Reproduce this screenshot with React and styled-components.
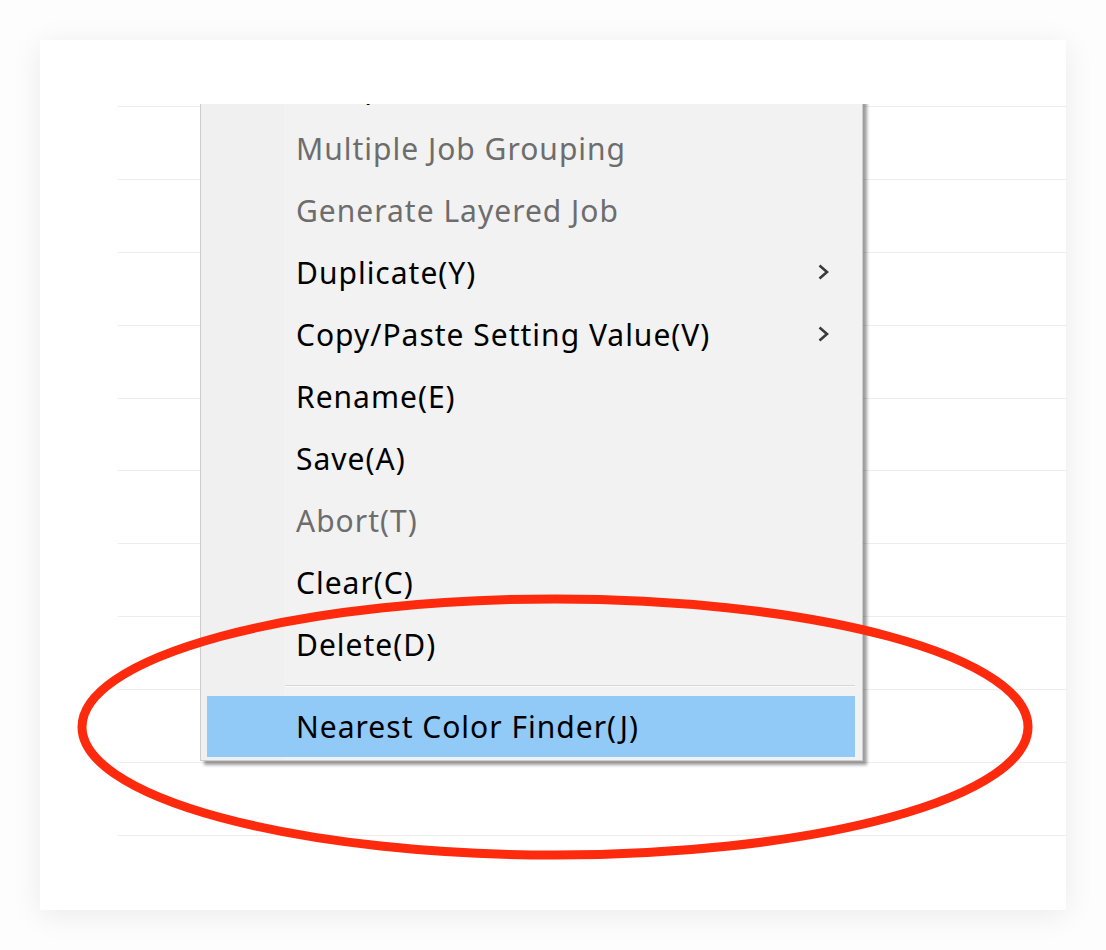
import React from 'react';
import styled, { createGlobalStyle } from 'styled-components';

const GlobalStyle = createGlobalStyle`
    html, body {
        margin: 0;
        padding: 0;
        background: #ffffff;
    }
`;

const Page = styled.div`
    width: 1106px;
    height: 950px;
    padding: 40px;
    box-sizing: border-box;
    background: #fdfdfd;
`;

const Card = styled.div`
    position: relative;
    width: 1026px;
    height: 870px;
    background: #ffffff;
    box-shadow: 0 5px 28px rgba(0, 0, 0, 0.08);
`;

const Sheet = styled.div`
    position: relative;
    top: 64px;
    height: 806px;
    overflow: hidden;
    padding: 2px 0 0 78px;
    box-sizing: border-box;
`;

const Row = styled.div`
    height: 72.9px;
    box-sizing: border-box;
    border-top: 1px solid #ededed;
`;

const Menu = styled.div`
    position: absolute;
    top: -52px;
    left: 160px;
    width: 663px;
    box-sizing: border-box;
    padding: 2px 7px 3px 6px;
    border: 1px solid #cccccc;
    background: linear-gradient(to right, #f0f0f0 83px, #f2f2f2 83px);
    box-shadow: 4px 4px 3px rgba(0, 0, 0, 0.38);
    font-family: "Noto Sans", "Open Sans", sans-serif;
    font-size: 30px;
    letter-spacing: 1px;
`;

const Item = styled.div`
    display: flex;
    align-items: center;
    justify-content: space-between;
    height: ${props => (props.$active ? 61 : 62)}px;
    padding: 0 25px 0 89px;
    background: ${props => (props.$active ? '#91c9f7' : 'transparent')};
    color: ${props => (props.$disabled ? '#6d6d6d' : '#000000')};
    white-space: nowrap;
`;

const Separator = styled.div`
    height: 21px;
    display: flex;
    align-items: center;
    padding-left: 78px;

    &::after {
        content: '';
        flex: 1;
        height: 1px;
        background: #d7d7d7;
        border-bottom: 1px solid #fafafa;
    }
`;

const Chevron = () => (
    <svg width="13" height="16" viewBox="0 0 13 16">
        <polyline points="2.5,1.5 10,8 2.5,14.5" fill="none" stroke="#3a3a3a" strokeWidth="2.6" />
    </svg>
);

const Annotation = styled.svg`
    position: absolute;
    left: -40px;
    top: -40px;
    width: 1106px;
    height: 950px;
    pointer-events: none;
`;

const items = [
    { label: 'Compare Items(M)' },
    { label: 'Multiple Job Grouping', disabled: true },
    { label: 'Generate Layered Job', disabled: true },
    { label: 'Duplicate(Y)', submenu: true },
    { label: 'Copy/Paste Setting Value(V)', submenu: true },
    { label: 'Rename(E)' },
    { label: 'Save(A)' },
    { label: 'Abort(T)', disabled: true },
    { label: 'Clear(C)' },
    { label: 'Delete(D)' },
];

const App = () => {
    return (
        <Page>
            <GlobalStyle />
            <Card>
                <Sheet>
                    {Array.from({ length: 11 }).map((_, index) => (
                        <Row key={index} />
                    ))}
                    <Menu>
                        {items.map((item, index) => (
                            <Item key={index} $disabled={item.disabled}>
                                <span>{item.label}</span>
                                {item.submenu && <Chevron />}
                            </Item>
                        ))}
                        <Separator />
                        <Item $active>
                            <span>Nearest Color Finder(J)</span>
                        </Item>
                    </Menu>
                </Sheet>
                <Annotation viewBox="0 0 1106 950">
                    <ellipse cx="555" cy="727" rx="473" ry="128" fill="none" stroke="#fd2a0e" strokeWidth="9" />
                </Annotation>
            </Card>
        </Page>
    );
};

export default App;
